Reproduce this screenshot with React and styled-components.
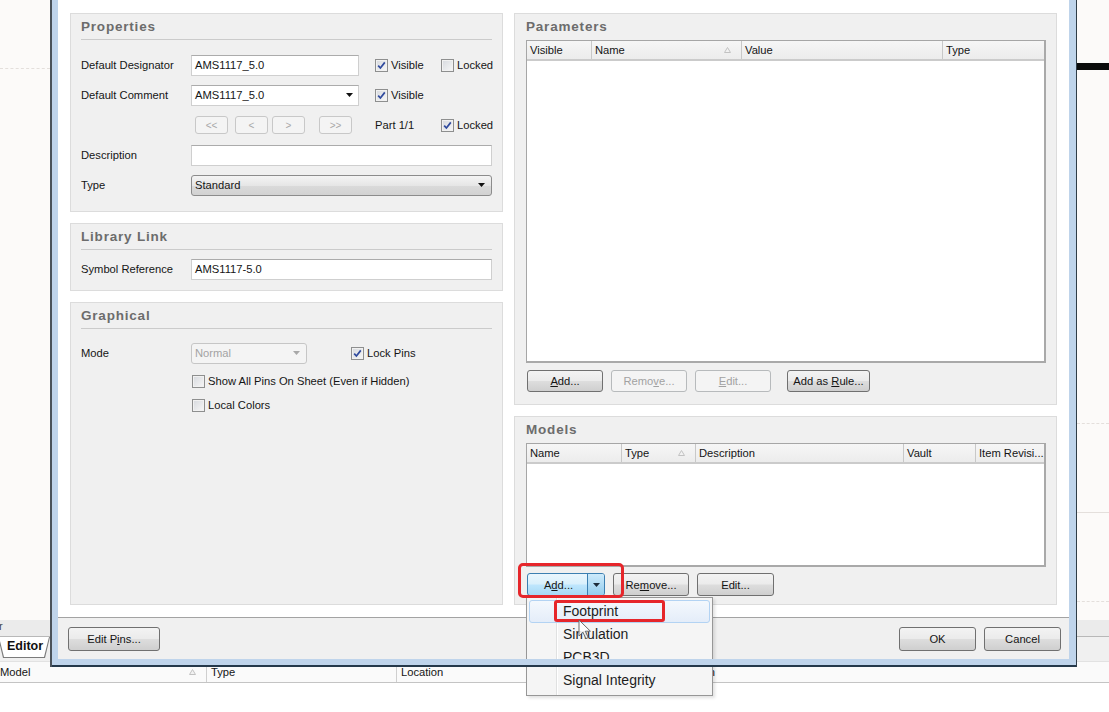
import React from "react";
import styled, { createGlobalStyle, css } from "styled-components";

const FONT = `"Liberation Sans", Arial, Helvetica, sans-serif`;

const GlobalStyle = createGlobalStyle`
  html, body {
    margin: 0;
    padding: 0;
  }
  body {
    width: 1109px;
    height: 712px;
    overflow: hidden;
    background: #fcfaf9;
    font-family: ${FONT};
  }
  #root {
    width: 1109px;
    height: 712px;
  }
`;

/* ---------- background application ---------- */

const Desktop = styled.div`
  position: relative;
  width: 1109px;
  height: 712px;
  overflow: hidden;
  display: flex;
  flex-direction: column;
  background: #fcfaf9;
  font-family: ${FONT};
  font-size: 11.2px;
  color: #151515;
`;

const Canvas = styled.div`
  position: relative;
  height: 620px;
  flex-shrink: 0;
`;

const SheetLine = styled.div`
  position: absolute;
  left: ${(p) => p.$x}px;
  top: ${(p) => p.$y}px;
  width: ${(p) => p.$w}px;
  border-top: 1px ${(p) => (p.$dashed ? "dashed" : "solid")} #e4dfdc;
`;

const Wire = styled.div`
  position: absolute;
  left: 1077px;
  top: 63px;
  width: 40px;
  height: 7px;
  background: #0b0b0b;
`;

const Dock = styled.div`
  flex: 1;
  display: flex;
  flex-direction: column;
  background: #fff;
`;

const DockStrip = styled.div`
  height: 16px;
  background: #ebebeb;
  border-bottom: 1px solid #b8b8b8;
  line-height: 12px;
  font-size: 11px;
  color: #444;
  overflow: hidden;
  span {
    margin-left: -1px;
  }
`;

const TabRow = styled.div`
  height: 24px;
  background: #f0f0f0;
  display: flex;
`;

const TabEdge = styled.div`
  margin-left: -2px;
  width: 52px;
  height: 21px;
  background: #7b7b7b;
  clip-path: polygon(0 0, 100% 0, calc(100% - 5px) 100%, 5px 100%);
  display: flex;
`;

const TabFace = styled.div`
  flex: 1;
  margin: 0 1px 1px 1px;
  background: #fff;
  clip-path: polygon(0 0, 100% 0, calc(100% - 5px) 100%, 5px 100%);
  font-weight: bold;
  font-size: 12.5px;
  line-height: 19px;
  padding-left: 8px;
  color: #111;
`;

const ListHeader = styled.div`
  height: 20px;
  display: flex;
  align-items: center;
  background: #fafafa;
  border-top: 1px solid #e2e2e2;
  border-bottom: 1px solid #c4c4c4;
`;

const ListCol = styled.div`
  width: ${(p) => p.$w}px;
  margin-left: ${(p) => p.$ml || 0}px;
  height: 100%;
  box-sizing: border-box;
  flex-shrink: 0;
  display: flex;
  align-items: center;
  justify-content: space-between;
  padding: 0 10px 0 4px;
  border-left: ${(p) => (p.$first ? "none" : "1px solid #cfcfcf")};
`;

/* ---------- dialog window ---------- */

const FRAME = "#bfd4eb";

const Dialog = styled.div`
  position: absolute;
  left: 50px;
  top: 0;
  width: 1027px;
  height: 667px;
  box-sizing: border-box;
  z-index: 2;
  display: flex;
  flex-direction: column;
  background: ${FRAME};
  border-left: 2px solid #4a525a;
  border-right: 1px solid #2f3c47;
  padding: 0 7px 0 6px;
`;

const Client = styled.div`
  position: relative;
  flex: 1;
  min-width: 0;
  display: flex;
  flex-direction: column;
  background: #fff;
`;

const FrameBottom = styled.div`
  position: relative;
  z-index: 5;
  flex-shrink: 0;
  height: 6px;
  margin: 0 -7px 0 -6px;
  background: ${FRAME};
  border-bottom: 2px solid #24384a;
`;

const Body = styled.div`
  flex: 1;
  display: grid;
  grid-template-columns: 433px minmax(0, 1fr);
  column-gap: 11px;
  padding: 13px 12px 12px 12px;
  background: #fff;
`;

const Column = styled.div`
  display: flex;
  flex-direction: column;
  gap: 11px;
  min-height: 0;
  min-width: 0;
`;

const Panel = styled.section`
  box-sizing: border-box;
  min-width: 0;
  display: flex;
  flex-direction: column;
  background: #f0f0f0;
  border: 1px solid #dcdcdc;
  padding: 0 ${(p) => p.$padR ?? 10}px ${(p) => p.$padB ?? 0}px
    ${(p) => p.$padL ?? 10}px;
  ${(p) => p.$grow && "flex: 1;"}
  ${(p) =>
    p.$h &&
    css`
      height: ${p.$h}px;
      flex-shrink: 0;
    `}
`;

const PanelTitle = styled.h3`
  margin: 0;
  height: 25px;
  line-height: 25px;
  border-bottom: 1px solid ${(p) => (p.$noLine ? "transparent" : "#cbcbcb")};
  font-family: ${FONT};
  font-size: 13.5px;
  font-weight: bold;
  letter-spacing: 0.8px;
  color: #6c6c6c;
  flex-shrink: 0;
`;

const PanelBody = styled.div`
  padding: ${(p) => p.$pt || 0}px 0 ${(p) => p.$pb || 0}px 0;
`;

const Row = styled.div`
  display: flex;
  align-items: center;
  height: ${(p) => p.$h || 30}px;
`;

const Label = styled.span`
  width: 110px;
  flex-shrink: 0;
  white-space: nowrap;
`;

const TextBox = styled.div`
  box-sizing: border-box;
  width: ${(p) => p.$w}px;
  height: 21px;
  line-height: 19px;
  padding: 0 5px 0 3px;
  background: #fff;
  border: 1px solid #cfcfcf;
  border-top-color: #ababab;
  display: flex;
  align-items: center;
  justify-content: space-between;
  white-space: nowrap;
  flex-shrink: 0;
`;

const DropList = styled.div`
  box-sizing: border-box;
  width: ${(p) => p.$w}px;
  height: 21px;
  padding: 0 6px 0 3px;
  border: 1px solid #8c8c8c;
  border-radius: 3px;
  background: linear-gradient(#f4f4f4, #e6e6e6 50%, #dadada 51%, #d2d2d2);
  display: flex;
  align-items: center;
  justify-content: space-between;
`;

const DisabledCombo = styled.div`
  box-sizing: border-box;
  width: ${(p) => p.$w}px;
  height: 21px;
  padding: 0 6px 0 3px;
  border: 1px solid #c6c6c6;
  border-radius: 3px;
  background: #f4f4f4;
  color: #a3a3a3;
  display: flex;
  align-items: center;
  justify-content: space-between;
  flex-shrink: 0;
`;

const CheckLabel = styled.span`
  display: inline-flex;
  align-items: center;
  gap: 3px;
  margin-left: ${(p) => p.$ml || 0}px;
  width: ${(p) => (p.$w ? `${p.$w}px` : "auto")};
  flex-shrink: 0;
  white-space: nowrap;
`;

const Box = styled.span`
  box-sizing: border-box;
  width: 13px;
  height: 13px;
  border: 1px solid #8e8f8f;
  background: linear-gradient(135deg, #d6d9de, #f7f7f7);
  box-shadow: inset 0 0 0 1px #f1f1f1;
  display: inline-flex;
  align-items: center;
  justify-content: center;
  flex-shrink: 0;
`;

const Plain = styled.span`
  margin-left: ${(p) => p.$ml || 0}px;
  width: ${(p) => (p.$w ? `${p.$w}px` : "auto")};
  flex-shrink: 0;
  white-space: nowrap;
`;

const NavGroup = styled.div`
  width: 168px;
  display: flex;
  flex-shrink: 0;
`;

const NavButton = styled.span`
  box-sizing: border-box;
  width: 33px;
  height: 18px;
  margin-left: ${(p) => p.$ml}px;
  border: 1px solid #c8c8c8;
  border-radius: 3px;
  background: #f4f4f4;
  color: #a8a8a8;
  font-size: 10px;
  display: flex;
  align-items: center;
  justify-content: center;
`;

const TableBox = styled.div`
  flex: 1;
  display: flex;
  flex-direction: column;
  background: #fff;
  border: 1px solid #a6a6a6;
  border-right: 2px solid #a9a9a9;
  border-bottom: 2px solid #a9a9a9;
  min-height: 0;
  min-width: 0;
  overflow: hidden;
`;

const TableHead = styled.div`
  display: flex;
  height: 18px;
  background: linear-gradient(#f6f6f6, #ececec);
  border-bottom: 2px solid #cbcbcb;
  flex-shrink: 0;
`;

const HeadCell = styled.div`
  box-sizing: border-box;
  ${(p) => (p.$w ? `width: ${p.$w}px; flex-shrink: 0;` : "flex: 1; min-width: 0;")}
  display: flex;
  align-items: center;
  justify-content: space-between;
  padding: 0 10px 0 3px;
  border-left: ${(p) => (p.$first ? "none" : "1px solid #c8c8c8")};
  white-space: nowrap;
  overflow: hidden;
`;

const ButtonRow = styled.div`
  display: flex;
  gap: ${(p) => p.$gap || 8}px;
  margin-top: ${(p) => p.$mt}px;
  padding-left: 1px;
  flex-shrink: 0;
`;

const Button = styled.span`
  box-sizing: border-box;
  width: ${(p) => p.$w}px;
  height: ${(p) => p.$h || 22}px;
  margin-left: ${(p) => p.$ml || 0}px;
  border: 1px solid #707070;
  border-radius: 3px;
  background: linear-gradient(#f3f3f3, #ebebeb 48%, #dddddd 52%, #cfcfcf);
  display: inline-flex;
  align-items: center;
  justify-content: center;
  color: #141414;
  white-space: nowrap;
  flex-shrink: 0;
  ${(p) =>
    p.$off &&
    css`
      border-color: #b7babc;
      background: #f4f4f4;
      color: #a2a2a2;
    `}
  u {
    text-decoration: underline;
    text-underline-offset: 1px;
  }
`;

const SplitButton = styled.div`
  box-sizing: border-box;
  width: 78px;
  height: 23px;
  display: flex;
  border: 1px solid #3c7fb1;
  border-radius: 3px;
  overflow: hidden;
  background: linear-gradient(#eaf6fd, #d9f0fc 48%, #bee6fd 52%, #a7d9f5);
  flex-shrink: 0;
`;

const SplitMain = styled.span`
  flex: 1;
  display: flex;
  align-items: center;
  justify-content: center;
  padding-left: 2px;
`;

const SplitDrop = styled.span`
  width: 16px;
  border-left: 1px solid #3c7fb1;
  background: linear-gradient(#cdeafb, #93cdee);
  display: flex;
  align-items: center;
  justify-content: center;
`;

const Footer = styled.div`
  flex-shrink: 0;
  height: 41px;
  border-top: 1px solid #a3a3a3;
  background: #f0f0f0;
  display: flex;
  align-items: center;
  justify-content: space-between;
  padding: 0 8px 0 10px;
`;

const FooterRight = styled.div`
  display: flex;
  gap: 8px;
`;

/* ---------- overlays ---------- */

const Menu = styled.ul`
  position: absolute;
  left: 468px;
  top: 597px;
  width: 187px;
  margin: 0;
  padding: 2px 2px 3px 2px;
  box-sizing: border-box;
  list-style: none;
  z-index: 4;
  border: 1px solid #979797;
  background: linear-gradient(
    to right,
    #f5f5f5 29px,
    #e0e1e1 29px,
    #e0e1e1 30px,
    #ffffff 30px,
    #ffffff 31px,
    #f5f5f5 31px
  );
  box-shadow: 2px 2px 3px rgba(0, 0, 0, 0.12);
  font-size: 14px;
  color: #1d1d1d;
`;

const MenuItem = styled.li`
  height: 23px;
  line-height: 21px;
  box-sizing: border-box;
  padding-left: 33px;
  border: 1px solid transparent;
  border-radius: 3px;
  ${(p) =>
    p.$hot &&
    css`
      border-color: #b3d3f3;
      background: linear-gradient(#f4f8fd, #e4edf9);
    `}
`;

const Callout = styled.div`
  position: absolute;
  left: ${(p) => p.$x}px;
  top: ${(p) => p.$y}px;
  width: ${(p) => p.$w}px;
  height: ${(p) => p.$h}px;
  box-sizing: border-box;
  border: 3px solid #e6262b;
  border-radius: ${(p) => p.$r}px;
  z-index: 6;
  pointer-events: none;
`;

const Pointer = styled.svg`
  position: absolute;
  left: 520px;
  top: 619px;
  z-index: 7;
`;

/* ---------- small drawings ---------- */

const Arrow = ({ color = "#111" }) => (
  <svg width="7" height="4" viewBox="0 0 7 4">
    <path d="M0 0 H7 L3.5 4 Z" fill={color} />
  </svg>
);

const SortMark = () => (
  <svg width="7" height="6" viewBox="0 0 7 6">
    <path d="M3.5 0.5 L6.5 5.5 H0.5 Z" fill="#f2f2f2" stroke="#c2c2c2" />
  </svg>
);

const Check = ({ checked, children, ml, w }) => (
  <CheckLabel $ml={ml} $w={w}>
    <Box>
      {checked && (
        <svg width="9" height="9" viewBox="0 0 9 9">
          <path
            d="M1.2 4.6 L3.4 7 L7.8 1.4"
            fill="none"
            stroke="#2f4a9e"
            strokeWidth="1.7"
          />
        </svg>
      )}
    </Box>
    {children}
  </CheckLabel>
);

const Table = ({ columns }) => (
  <TableBox>
    <TableHead>
      {columns.map((c, i) => (
        <HeadCell key={c.label} $w={c.w} $first={i === 0}>
          <span>{c.label}</span>
          {c.sort && <SortMark />}
        </HeadCell>
      ))}
    </TableHead>
  </TableBox>
);

const paramCols = [
  { label: "Visible", w: 64 },
  { label: "Name", w: 150, sort: true },
  { label: "Value", w: 201 },
  { label: "Type" },
];

const modelCols = [
  { label: "Name", w: 94 },
  { label: "Type", w: 74, sort: true },
  { label: "Description", w: 208 },
  { label: "Vault", w: 72 },
  { label: "Item Revisi..." },
];

export default function App() {
  return (
    <Desktop>
      <GlobalStyle />
      <Canvas>
        <SheetLine $x={0} $y={68} $w={50} $dashed />
        <SheetLine $x={1077} $y={423} $w={32} $dashed />
        <SheetLine $x={1077} $y={512} $w={32} />
        <SheetLine $x={1077} $y={601} $w={32} $dashed />
        <Wire />
      </Canvas>
      <Dock>
        <DockStrip>
          <span>r</span>
        </DockStrip>
        <TabRow>
          <TabEdge>
            <TabFace>Editor</TabFace>
          </TabEdge>
        </TabRow>
        <ListHeader>
          <ListCol $w={210} $ml={-4} $first>
            <span>Model</span>
            <SortMark />
          </ListCol>
          <ListCol $w={190}>Type</ListCol>
          <ListCol $w={258}>Location</ListCol>
          <ListCol $w={200}>Description</ListCol>
        </ListHeader>
      </Dock>

      <Dialog>
        <Client>
          <Body>
            <Column>
              <Panel>
                <PanelTitle>Properties</PanelTitle>
                <PanelBody $pt={10} $pb={11}>
                  <Row>
                    <Label>Default Designator</Label>
                    <TextBox $w={168}>AMS1117_5.0</TextBox>
                    <Check checked ml={16} w={66}>
                      Visible
                    </Check>
                    <Check>Locked</Check>
                  </Row>
                  <Row>
                    <Label>Default Comment</Label>
                    <TextBox $w={168}>
                      AMS1117_5.0
                      <Arrow />
                    </TextBox>
                    <Check checked ml={16} w={66}>
                      Visible
                    </Check>
                  </Row>
                  <Row>
                    <Label />
                    <NavGroup>
                      <NavButton $ml={4}>&lt;&lt;</NavButton>
                      <NavButton $ml={7}>&lt;</NavButton>
                      <NavButton $ml={4}>&gt;</NavButton>
                      <NavButton $ml={14}>&gt;&gt;</NavButton>
                    </NavGroup>
                    <Plain $ml={16} $w={66}>
                      Part 1/1
                    </Plain>
                    <Check checked>Locked</Check>
                  </Row>
                  <Row>
                    <Label>Description</Label>
                    <TextBox $w={301} />
                  </Row>
                  <Row>
                    <Label>Type</Label>
                    <DropList $w={301}>
                      Standard
                      <Arrow />
                    </DropList>
                  </Row>
                </PanelBody>
              </Panel>

              <Panel>
                <PanelTitle>Library Link</PanelTitle>
                <PanelBody $pt={4} $pb={6}>
                  <Row>
                    <Label>Symbol Reference</Label>
                    <TextBox $w={301}>AMS1117-5.0</TextBox>
                  </Row>
                </PanelBody>
              </Panel>

              <Panel $grow>
                <PanelTitle>Graphical</PanelTitle>
                <PanelBody $pt={10}>
                  <Row $h={28}>
                    <Label>Mode</Label>
                    <DisabledCombo $w={116}>
                      Normal
                      <Arrow color="#a8a8a8" />
                    </DisabledCombo>
                    <Check checked ml={44}>
                      Lock Pins
                    </Check>
                  </Row>
                  <Row $h={28}>
                    <Check ml={111}>Show All Pins On Sheet (Even if Hidden)</Check>
                  </Row>
                  <Row $h={20}>
                    <Check ml={111}>Local Colors</Check>
                  </Row>
                </PanelBody>
              </Panel>
            </Column>

            <Column>
              <Panel $h={392} $padL={11} $padB={12}>
                <PanelTitle $noLine>Parameters</PanelTitle>
                <Table columns={paramCols} />
                <ButtonRow $mt={7}>
                  <Button $w={76}>
                    <u>A</u>dd...
                  </Button>
                  <Button $w={76} $off>
                    Remo<u>v</u>e...
                  </Button>
                  <Button $w={76} $off>
                    <u>E</u>dit...
                  </Button>
                  <Button $w={83} $ml={8}>
                    Add as&nbsp;<u>R</u>ule...
                  </Button>
                </ButtonRow>
              </Panel>

              <Panel $grow $padL={11} $padB={8}>
                <PanelTitle $noLine>Models</PanelTitle>
                <Table columns={modelCols} />
                <ButtonRow $mt={6}>
                  <SplitButton>
                    <SplitMain>
                      A<u>d</u>d...
                    </SplitMain>
                    <SplitDrop>
                      <Arrow color="#1b2b3a" />
                    </SplitDrop>
                  </SplitButton>
                  <Button $w={76} $h={23}>
                    Re<u>m</u>ove...
                  </Button>
                  <Button $w={77} $h={23}>
                    Edit...
                  </Button>
                </ButtonRow>
              </Panel>
            </Column>
          </Body>

          <Footer>
            <Button $w={92} $h={24}>
              Edit P<u>i</u>ns...
            </Button>
            <FooterRight>
              <Button $w={77} $h={24}>
                OK
              </Button>
              <Button $w={77} $h={24}>
                Cancel
              </Button>
            </FooterRight>
          </Footer>

          <Menu>
            <MenuItem $hot>Footprint</MenuItem>
            <MenuItem>Simulation</MenuItem>
            <MenuItem>PCB3D</MenuItem>
            <MenuItem>Signal Integrity</MenuItem>
          </Menu>

          <Callout $x={460} $y={563} $w={106} $h={35} $r={5} />
          <Callout $x={496} $y={600} $w={111} $h={22} $r={3} />

          <Pointer width="14" height="22" viewBox="0 0 14 22">
            <path
              d="M1 1 L1 17 L5 13.2 L7.8 19.6 L10.2 18.6 L7.4 12.2 L12.4 12.2 Z"
              fill="rgba(255,255,255,0.85)"
              stroke="#6a6a6a"
              strokeWidth="1"
            />
          </Pointer>
        </Client>
        <FrameBottom />
      </Dialog>
    </Desktop>
  );
}
